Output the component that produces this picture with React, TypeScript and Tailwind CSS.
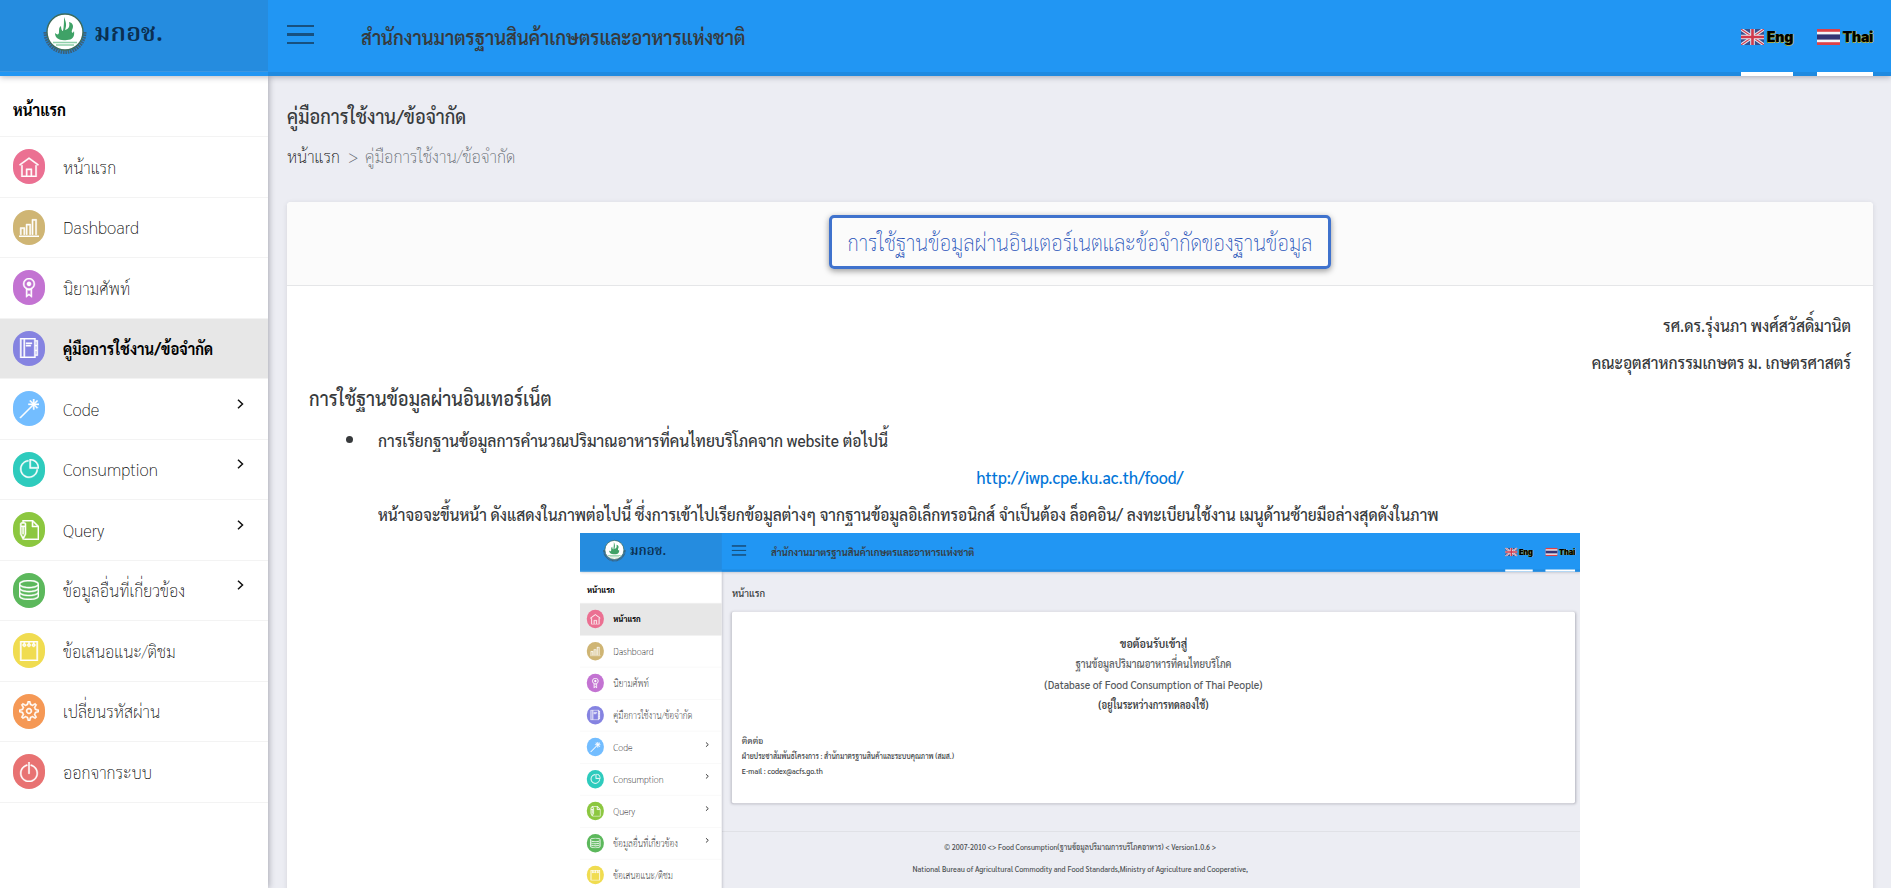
import type { ReactNode } from 'react';
import type { IconType } from 'react-icons';
import {
  TfiAgenda,
  TfiBarChart,
  TfiHome,
  TfiMedallAlt,
  TfiNotepad,
  TfiPieChart,
  TfiPowerOff,
  TfiServer,
  TfiSettings,
  TfiWand,
  TfiWrite,
} from 'react-icons/tfi';

type Item = { label: string; icon: IconType; color: string; more?: boolean; latin?: boolean };

const ITEMS: Item[] = [
  { label: 'หน้าแรก', icon: TfiHome, color: 'bg-[#eb7092]' },
  { label: 'Dashboard', icon: TfiBarChart, color: 'bg-[#cfb574]', latin: true },
  { label: 'นิยามศัพท์', icon: TfiMedallAlt, color: 'bg-[#c373d2]' },
  { label: 'คู่มือการใช้งาน/ข้อจำกัด', icon: TfiAgenda, color: 'bg-[#8583e1]' },
  { label: 'Code', icon: TfiWand, color: 'bg-[#73bdff]', more: true, latin: true },
  { label: 'Consumption', icon: TfiPieChart, color: 'bg-[#2ecbbd]', more: true, latin: true },
  { label: 'Query', icon: TfiWrite, color: 'bg-[#8cc740]', more: true, latin: true },
  { label: 'ข้อมูลอื่นที่เกี่ยวข้อง', icon: TfiServer, color: 'bg-[#5cb85c]', more: true },
  { label: 'ข้อเสนอแนะ/ติชม', icon: TfiNotepad, color: 'bg-[#f0dc50]' },
  { label: 'เปลี่ยนรหัสผ่าน', icon: TfiSettings, color: 'bg-[#f59855]' },
  { label: 'ออกจากระบบ', icon: TfiPowerOff, color: 'bg-[#e87272]' },
];

function Emblem() {
  return (
    <svg viewBox="0 0 44 44" className="mb-[3px] h-11 w-11">
      <path d="M2.5 20a19.5 20 0 1 0 39 0" fill="none" stroke="#3c6079" strokeWidth="4" strokeDasharray="1.6 .8" />
      <circle cx="22" cy="20" r="18" fill="#fff" stroke="#3d6b5c" strokeWidth="1.4" />
      <path d="M21 5c2 5 3 8 1 13 4-1 5-4 4-8 4 1 5 4 3 8-1 3 1 4 2 1 1 6-2 9-7 9-8 1-12-2-12-7 2 2 4 2 4-1 0-3 0-5 2-6 0 3 1 5 2 5 1-5 1-9 1-14z" fill="#3fa267" />
      <path d="M10 30.500h24M13 33h18" stroke="#8fcfa9" strokeWidth="1.6" />
    </svg>
  );
}

function FlagUk() {
  return (
    <svg viewBox="0 0 23 16" className="h-4 w-[23px]">
      <rect width="23" height="16" fill="#37508f" />
      <path d="M0 0l23 16M23 0L0 16" stroke="#e6e6ee" strokeWidth="3.200" />
      <path d="M0 0l23 16M23 0L0 16" stroke="#d0394b" strokeWidth="1.100" />
      <path d="M11.5 0v16M0 8h23" stroke="#e6e6ee" strokeWidth="4.600" />
      <path d="M11.5 0v16M0 8h23" stroke="#d0394b" strokeWidth="2.600" />
    </svg>
  );
}

function FlagThai() {
  return (
    <svg viewBox="0 0 23 16" className="h-4 w-[23px]">
      <rect width="23" height="16" fill="#dd4148" />
      <rect y="2.8" width="23" height="10.4" fill="#f4f4f8" />
      <rect y="5.4" width="23" height="5.2" fill="#343474" />
    </svg>
  );
}

function Lang({ flag, label, width }: { flag: ReactNode; label: string; width: string }) {
  return (
    <div className={`flex h-full items-center justify-between border-b-4 border-white pb-[3px] pt-[5px] ${width}`}>
      {flag}
      <span className="font-[Inter] text-[14px] font-black leading-4 tracking-[-0.2px] text-black [text-shadow:1px_0_0_#a8a83c,0_1px_0_#a8a83c]">
        {label}
      </span>
    </div>
  );
}

function Sidebar({ active, tight }: { active: number; tight?: boolean }) {
  const items = tight ? ITEMS.slice(0, 9) : ITEMS;
  return (
    <nav className="z-10 w-[268px] shrink-0 bg-white shadow-[1px_0_6px_rgba(43,43,60,0.35)]">
      <div className={`flex items-center border-b border-[#f3f3f3] pl-[13px] pt-2 font-bold text-black ${tight ? 'h-[60px]' : 'h-[61px]'}`}>
        <span className="origin-left scale-x-[0.885] text-[17px]">หน้าแรก</span>
      </div>
      {items.map(({ label, icon: Icon, color, more, latin }, i) => (
        <div
          key={label}
          className={`flex h-[60.5px] items-center border-b border-[#f3f3f3] pl-[13px] pr-6 ${i === active ? 'bg-[#e7e7e7] font-bold text-black' : 'font-extralight text-black'}`}
        >
          <span className={`flex h-[35px] w-8 shrink-0 items-center justify-center rounded-full text-white ${color}`}>
            <Icon className="h-5 w-5 stroke-white stroke-[0.4]" />
          </span>
          <span
            className={`ml-[18px] grow origin-left whitespace-nowrap ${i === active ? 'scale-x-[0.868] text-[17px]' : latin ? 'scale-x-[0.975] text-[17.5px]' : 'scale-x-[0.925] text-[17.5px]'}`}
          >
            {label}
          </span>
          {more && (
            <svg viewBox="0 0 7 10" className="mb-[10px] h-[10px] w-[7px]">
              <path d="M1 .8L5.5 5 1 9.2" fill="none" stroke="#111" strokeWidth="1.5" />
            </svg>
          )}
        </div>
      ))}
    </nav>
  );
}

function Shell({ active, embedded, children }: { active: number; embedded?: boolean; children: ReactNode }) {
  return (
    <div className="flex h-full w-full flex-col overflow-hidden bg-[#ecedf3] font-['Sarabun','Noto_Sans',sans-serif] text-[#373a3c]">
      <header className={`z-20 flex shrink-0 bg-[#2196f3] shadow-[0_1px_6px_rgba(43,43,60,0.35)] ${embedded ? 'h-[73px]' : 'h-[76px]'}`}>
        <div className="flex h-[72px] w-[268px] items-center border-b border-[#3c97e2] bg-[#258cdf] pl-[43px]">
          <Emblem />
          <span className="ml-[7px] pb-px font-['Noto_Serif_Thai',serif] text-[25px] font-semibold text-[#0b2f50]">มกอช.</span>
        </div>
        <div className="flex grow items-center border-b-4 border-[#1f8ae0] pl-[19px]">
          <div className="mb-[3px] flex w-[27px] flex-col gap-[6px]">
            <i className="h-[2.4px] bg-[#17507f]" />
            <i className="h-[2.4px] bg-[#17507f]" />
            <i className="h-[2.4px] bg-[#17507f]" />
          </div>
          <h1 className="ml-[47px] mt-0.5 origin-left scale-x-[0.895] text-[20.5px] font-semibold">สำนักงานมาตรฐานสินค้าเกษตรและอาหารแห่งชาติ</h1>
          <div className={`-mb-1 ml-auto flex gap-6 self-stretch ${embedded ? 'pr-2.5' : 'pr-[18px]'}`}>
            <Lang flag={<FlagUk />} label="Eng" width="w-[52px]" />
            <Lang flag={<FlagThai />} label="Thai" width="w-14" />
          </div>
        </div>
      </header>
      <div className="flex min-h-0 grow">
        <Sidebar active={active} tight={embedded} />
        <main className="flex min-w-0 grow flex-col">{children}</main>
      </div>
    </div>
  );
}

function HomePreview() {
  return (
    <div className="mx-auto mt-px h-[360px] w-[1000px] overflow-hidden">
      <div className="h-[682px] w-[1891px] origin-top-left scale-[0.529]">
        <Shell active={0} embedded>
          <h2 className="origin-left scale-x-[0.913] pl-[21px] pt-[26px] text-[20px] font-medium leading-7">หน้าแรก</h2>
          <section className="ml-[19px] mr-2.5 mt-[22px] h-[362px] shrink-0 rounded bg-white px-[19px] pt-[42px] shadow-[0_1px_5px_rgba(43,43,60,0.3)]">
            <div className="text-center text-[21px] leading-[38px]">
              <p className="scale-x-[0.97] font-semibold">ขอต้อนรับเข้าสู่</p>
              <p className="scale-x-[0.866] text-[#55595c]">ฐานข้อมูลปริมาณอาหารที่คนไทยบริโภค</p>
              <p className="scale-x-[0.935] text-[#55595c]">(Database of Food Consumption of Thai People)</p>
              <p className="scale-x-[0.85] font-semibold">(อยู่ในระหว่างการทดลองใช้)</p>
            </div>
            <div className="mt-[34px] text-[15px] font-medium leading-[29px]">
              <p className="text-[17px] font-normal">ติดต่อ</p>
              <p className="origin-left scale-x-[0.87]">ฝ่ายประชาสัมพันธ์โครงการ : สำนักมาตรฐานสินค้าและระบบคุณภาพ (สมส.)</p>
              <p className="origin-left scale-x-[0.91]">E-mail : codex@acfs.go.th</p>
            </div>
          </section>
          <footer className="mt-[53px] border-t border-[#d5d6dc] pr-[268px] pt-[7px] text-center text-[14.5px] leading-[42px] text-[#4a4d50]">
            <p className="scale-x-[0.93]">© 2007-2010 &lt;&gt; Food Consumption(ฐานข้อมูลปริมาณการบริโภคอาหาร) &lt; Version1.0.6 &gt;</p>
            <p className="scale-x-[0.955]">National Bureau of Agricultural Commodity and Food Standards,Ministry of Agriculture and Cooperative,</p>
          </footer>
        </Shell>
      </div>
    </div>
  );
}

export default function App() {
  return (
    <div className="h-[888px] w-full overflow-hidden">
      <Shell active={3}>
        <h2 className="origin-left scale-x-[0.908] pl-[21px] pt-[26px] text-[20px] font-medium leading-7">คู่มือการใช้งาน/ข้อจำกัด</h2>
        <div className="flex whitespace-nowrap pl-[19px] pt-[14px] text-[17.5px] font-extralight leading-6 text-black">
          <span className="w-[61px] origin-left scale-x-[0.92]">หน้าแรก</span>
          <span className="w-[17px] text-[#5d656b]">&gt;</span>
          <span className="origin-left scale-x-[0.93] text-[#5d656b]">คู่มือการใช้งาน/ข้อจำกัด</span>
        </div>
        <section className="ml-[19px] mr-[18px] mt-[34px] rounded-t bg-white shadow-[0_1px_5px_rgba(43,43,60,0.12)]">
          <div className="flex h-[84px] justify-center rounded-t border-b border-[#e5e6e8] bg-[#fbfbfb] pt-[13px]">
            <button className="flex h-[54px] w-[502px] items-center justify-center whitespace-nowrap rounded-[5px] border-[3px] border-[#3f72cd] text-[22.5px] font-extralight text-[#2450b8] shadow-[0_2px_6px_rgba(0,0,0,0.4)]">
              <span className="scale-x-[0.905]">การใช้ฐานข้อมูลผ่านอินเตอร์เนตและข้อจำกัดของฐานข้อมูล</span>
            </button>
          </div>
          <div className="px-[22px] pt-5 text-[17.5px] font-medium leading-[37px]">
            <p className="origin-right scale-x-[0.886] text-right">รศ.ดร.รุ่งนภา พงศ์สวัสดิ์มานิต</p>
            <p className="origin-right scale-x-[0.89] text-right">คณะอุตสาหกรรมเกษตร ม. เกษตรศาสตร์</p>
            <h3 className="-mt-px origin-left scale-x-[0.89] text-[20.5px]">การใช้ฐานข้อมูลผ่านอินเทอร์เน็ต</h3>
            <div className="mt-[5px] flex items-center">
              <i className="ml-[37px] mr-[25px] h-[7px] w-[7px] rounded-full bg-[#373a3c]" />
              <p className="origin-left scale-x-[0.888]">การเรียกฐานข้อมูลการคำนวณปริมาณอาหารที่คนไทยบริโภคจาก website ต่อไปนี้</p>
            </div>
            <p className="scale-x-[0.915] text-center text-[#0275d8]">http://iwp.cpe.ku.ac.th/food/</p>
            <div className="pl-[69px]">
              <p className="origin-left scale-x-[0.883] whitespace-nowrap">
                หน้าจอจะขึ้นหน้า ดังแสดงในภาพต่อไปนี้ ซึ่งการเข้าไปเรียกข้อมูลต่างๆ จากฐานข้อมูลอิเล็กทรอนิกส์ จำเป็นต้อง ล็อคอิน/ ลงทะเบียนใช้งาน เมนูด้านซ้ายมือล่างสุดดังในภาพ
              </p>
            </div>
            <HomePreview />
          </div>
        </section>
      </Shell>
    </div>
  );
}
